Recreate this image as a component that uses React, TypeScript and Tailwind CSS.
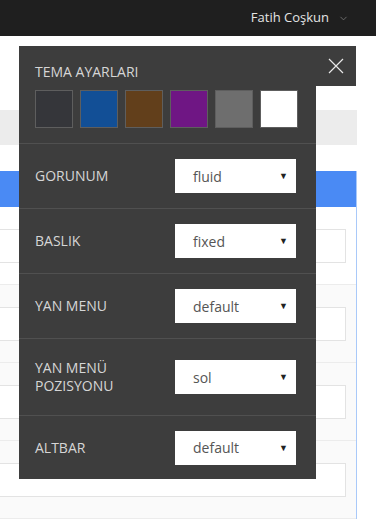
import { ChevronDown } from "lucide-react";

const swatches = ["#35363a", "#124f96", "#623f1b", "#6f1684", "#6e6e6e", "#ffffff"];

const options = [
    { label: ["GORUNUM"], value: "fluid", h: "h-[65px]" },
    { label: ["BASLIK"], value: "fixed", h: "h-[65px]" },
    { label: ["YAN MENU"], value: "default", h: "h-[65px]" },
    { label: ["YAN MENÜ", "POZISYONU"], value: "sol", h: "h-[77px]" },
    { label: ["ALTBAR"], value: "default", h: "h-[64px]" },
];

function FakeSelect({ value }: { value: string }) {
    return (
        <div className="w-[121px] h-[34px] bg-white flex items-center justify-between pl-[18px] pr-[8px] text-[14px] text-[#555]">
            <span>{value}</span>
            <span className="text-[9px] text-[#222]">▼</span>
        </div>
    );
}

export default function App() {
    return (
        <div className="relative w-[376px] h-[525px] overflow-hidden bg-white font-['Open_Sans',sans-serif]">
            {/* top bar */}
            <header className="h-9 bg-[#1f1f1f] flex justify-end items-center pr-[27px] gap-[9px]">
                <span className="text-[13px] text-[#e4e4e4]">Fatih Coşkun</span>
                <ChevronDown size={11} strokeWidth={1.5} className="text-[#8a8a8a]" />
            </header>

            {/* page underneath */}
            <div className="w-[357px] h-[35px] mt-[74px] bg-[#ececec]" />
            <div className="w-[357px] mt-[26px] border-r border-[#a9c9f9]">
                <div className="h-9 bg-[#4a8af4]" />
                {[0, 1, 2, 3].map((i) => (
                    <div key={i} className={`h-[78px] flex items-center pr-[10px] border-b border-[#ececec] ${i === 0 ? "bg-white" : "bg-[#fafafa]"}`}>
                        <div className="-ml-4 flex-1 h-[34px] bg-white border border-[#e3e3e3]" />
                    </div>
                ))}
            </div>

            {/* theme settings popup */}
            <div className="absolute left-[19px] top-[46px] w-[297px] bg-[#3d3d3d] text-[#d6d6d6] text-[14px]">
                <div className="pl-4 pt-4 pb-[15px]">
                    <div className="leading-5">TEMA AYARLARI</div>
                    <div className="flex gap-[7px] mt-2">
                        {swatches.map((c) => (
                            <div key={c} className="w-[38px] h-[38px] border border-[#5e5e5e]" style={{ backgroundColor: c }} />
                        ))}
                    </div>
                </div>
                {options.map((o, i) => (
                    <div key={i} className={`${o.h} border-t border-[#505050] flex items-center pl-4 pr-5`}>
                        <div className="flex-1 leading-[18px]">
                            {o.label.map((l) => (
                                <div key={l}>{l}</div>
                            ))}
                        </div>
                        <FakeSelect value={o.value} />
                    </div>
                ))}
            </div>
            <div className="absolute left-[316px] top-[46px] w-10 h-10 bg-[#3d3d3d] flex items-center justify-center">
                <svg width="16" height="16" viewBox="0 0 16 16">
                    <path d="M1 1 L15 15 M15 1 L1 15" stroke="#e8e8e8" strokeWidth="1.2" />
                </svg>
            </div>
        </div>
    );
}
